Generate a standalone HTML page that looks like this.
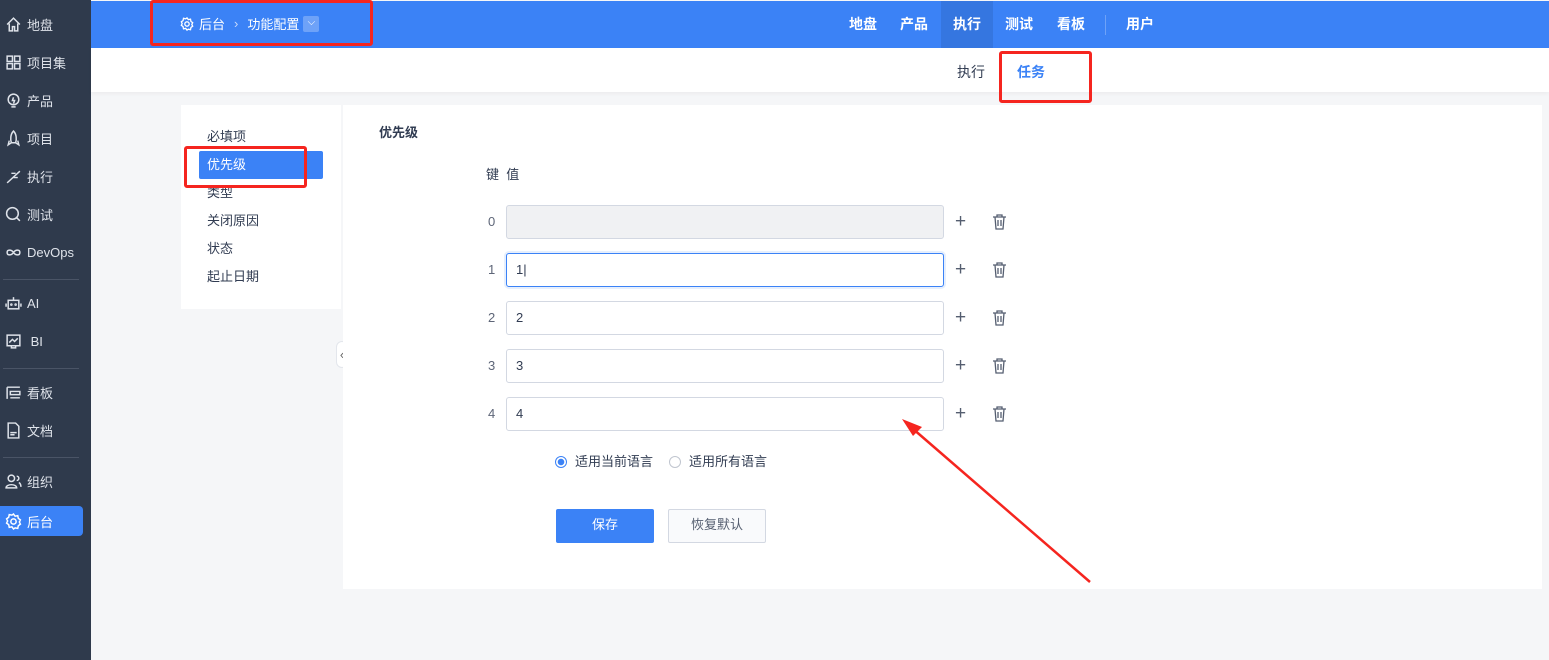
<!DOCTYPE html>
<html><head><meta charset="utf-8"><style>
*{box-sizing:border-box;margin:0;padding:0}
body{width:1549px;height:660px;overflow:hidden;font-family:"Liberation Sans","Noto Sans CJK SC",sans-serif;font-size:13px;color:#313c52;background:#f5f6f8;position:relative}
.side{position:absolute;left:0;top:0;width:91px;height:660px;background:#2f3a4c;color:#dfe3ea}
.si{position:absolute;left:0;width:83px;height:30px;display:flex;align-items:center;padding-left:5px;font-size:13px}
.si svg{width:17px;height:17px;margin-right:5px;stroke:#dfe3ea;fill:none;stroke-width:1.4}
.si.act{background:#3b82f6;border-radius:0 4px 4px 0;color:#fff}
.hr{position:absolute;left:3px;width:76px;height:1px;background:#4a5466}
.top{position:absolute;left:91px;top:1px;width:1458px;height:47px;background:#3b82f6;color:#fff}
.sub{position:absolute;left:91px;top:48px;width:1458px;height:44px;background:#fff;box-shadow:0 2px 4px rgba(0,0,0,.04)}
.red{position:absolute;border:3px solid #f5251f;border-radius:3px}
.nv{position:absolute;top:0;height:47px;line-height:47px;font-size:14px;font-weight:bold}
.panel{position:absolute;background:#fff}
.mi{position:absolute;left:207px;font-size:13px}
.inp{position:absolute;left:506px;width:438px;height:34px;border:1px solid #d3d8e2;border-radius:3px;background:#fff;padding-left:9px;line-height:32px;font-size:13px}
.k{position:absolute;left:488px;font-size:13px;color:#5e6678}
.plus{position:absolute;left:955px;font-size:19px;color:#555e70;line-height:1}
.trash{position:absolute;left:992px;width:15px;height:16px}
</style></head><body>
<div class="side">
 <div class="si" style="top:9px"><svg viewBox="0 0 16 16"><path d="M2 8L8 2l6 6M4 7v7h3v-4h2v4h3V7"/></svg>地盘</div>
 <div class="si" style="top:47px"><svg viewBox="0 0 16 16"><rect x="2" y="2" width="5" height="5"/><rect x="9" y="2" width="5" height="5"/><rect x="2" y="9" width="5" height="5"/><rect x="9" y="9" width="5" height="5"/></svg>项目集</div>
 <div class="si" style="top:85px"><svg viewBox="0 0 16 16"><circle cx="8" cy="7" r="5"/><path d="M6 14h4M8 5l-1 3h2l-1 3"/></svg>产品</div>
 <div class="si" style="top:123px"><svg viewBox="0 0 16 16"><path d="M8 1c3 3 3 8 2 11H6C5 9 5 4 8 1zM6 12l-3 2 1-4M10 12l3 2-1-4"/></svg>项目</div>
 <div class="si" style="top:161px"><svg viewBox="0 0 16 16"><path d="M2 14L14 3M6 5l4 0M8 9l4 0"/></svg>执行</div>
 <div class="si" style="top:199px"><svg viewBox="0 0 16 16"><circle cx="7" cy="7" r="5.5"/><path d="M11 11l3 3"/></svg>测试</div>
 <div class="si" style="top:237px"><svg viewBox="0 0 16 16"><path d="M8 8c-2-3-6-3-6 0s4 3 6 0c2-3 6-3 6 0s-4 3-6 0"/></svg>DevOps</div>
 <div class="hr" style="top:279px"></div>
 <div class="si" style="top:288px"><svg viewBox="0 0 16 16"><rect x="3" y="5" width="10" height="8"/><path d="M8 2v3M1 8v3M15 8v3"/><circle cx="6" cy="9" r=".5"/><circle cx="10" cy="9" r=".5"/></svg>AI</div>
 <div class="si" style="top:326px"><svg viewBox="0 0 16 16"><rect x="2" y="2" width="12" height="10"/><path d="M4 9l3-3 2 2 3-3M6 12v2h4v-2"/></svg>&nbsp;BI</div>
 <div class="hr" style="top:368px"></div>
 <div class="si" style="top:377px"><svg viewBox="0 0 16 16"><path d="M2 3h12M2 3v11M5 7h9v3H5zM5 13h9"/></svg>看板</div>
 <div class="si" style="top:415px"><svg viewBox="0 0 16 16"><path d="M3 1h7l3 3v11H3zM5 10h6M5 12h4"/></svg>文档</div>
 <div class="hr" style="top:457px"></div>
 <div class="si" style="top:466px"><svg viewBox="0 0 16 16"><circle cx="6" cy="5" r="3"/><path d="M1 14c0-4 10-4 10 0zM11 3a2 2 0 010 4M13 9c2 1 2 3 2 4"/></svg>组织</div>
 <div class="si act" style="top:506px"><svg viewBox="0 0 16 16" style="stroke:#fff"><circle cx="8" cy="8" r="2.5"/><path d="M8 1l1.5 2 2.5-.5.5 2.5 2 1.5-1 2 1 2-2 1.5-.5 2.5-2.5-.5L8 15l-1.5-2-2.5.5-.5-2.5-2-1.5 1-2-1-2 2-1.5.5-2.5 2.5.5z"/></svg>后台</div>
</div>
<div class="top">
 <div style="position:absolute;left:89px;top:13px;font-size:13px;display:flex;align-items:center">
  <svg width="14" height="14" viewBox="0 0 16 16" style="fill:none;stroke:#fff;stroke-width:1.5;margin-right:5px"><circle cx="8" cy="8" r="2.5"/><path d="M8 1l1.5 2 2.5-.5.5 2.5 2 1.5-1 2 1 2-2 1.5-.5 2.5-2.5-.5L8 15l-1.5-2-2.5.5-.5-2.5-2-1.5 1-2-1-2 2-1.5.5-2.5 2.5.5z"/></svg>后台<span style="margin:0 9px;color:#c9dbfb">›</span>功能配置<span style="display:inline-block;width:16px;height:16px;background:#6ea2f8;border-radius:2px;margin-left:4px;text-align:center;line-height:14px;font-size:10px">⌵</span></div>
 <div class="nv" style="left:758px">地盘</div>
 <div class="nv" style="left:809px">产品</div>
 <div class="nv" style="left:850px;width:52px;background:#3576e0;text-align:center">执行</div>
 <div class="nv" style="left:914px">测试</div>
 <div class="nv" style="left:966px">看板</div>
 <div style="position:absolute;left:1014px;top:14px;width:1px;height:20px;background:#6ea2f8"></div>
 <div class="nv" style="left:1035px">用户</div>
</div>
<div class="sub">
 <div style="position:absolute;left:866px;top:14px;font-size:14px">执行</div>
 <div style="position:absolute;left:926px;top:14px;font-size:14px;color:#3b82f6;font-weight:bold">任务</div>
</div>
<div class="panel" style="left:181px;top:105px;width:160px;height:204px"></div>
<div class="mi" style="top:126px">必填项</div>
<div style="position:absolute;left:199px;top:151px;width:124px;height:28px;background:#3b82f6;border-radius:2px"></div>
<div class="mi" style="top:154px;color:#fff">优先级</div>
<div class="mi" style="top:182px">类型</div>
<div class="mi" style="top:210px">关闭原因</div>
<div class="mi" style="top:238px">状态</div>
<div class="mi" style="top:266px">起止日期</div>
<div style="position:absolute;left:336px;top:341px;width:12px;height:27px;background:#fff;border:1px solid #e3e6ec;border-radius:6px;font-size:13px;color:#666;text-align:center;line-height:25px">‹</div>
<div class="panel" style="left:343px;top:105px;width:1199px;height:484px"></div>
<div style="position:absolute;left:379px;top:122px;font-weight:bold;font-size:13px">优先级</div>
<div style="position:absolute;left:486px;top:164px;font-size:13px">键&nbsp;&nbsp;值</div>
<div class="k" style="top:214px">0</div><div class="inp" style="top:205px;background:#f0f1f3"></div>
<div class="k" style="top:262px">1</div><div class="inp" style="top:253px;border-color:#3b82f6;box-shadow:0 0 0 2px #e6effd">1|</div>
<div class="k" style="top:310px">2</div><div class="inp" style="top:301px">2</div>
<div class="k" style="top:358px">3</div><div class="inp" style="top:349px">3</div>
<div class="k" style="top:406px">4</div><div class="inp" style="top:397px">4</div>
<div class="plus" style="top:212px">+</div><div class="plus" style="top:260px">+</div><div class="plus" style="top:308px">+</div><div class="plus" style="top:356px">+</div><div class="plus" style="top:404px">+</div>
<svg class="trash" style="top:214px" viewBox="0 0 15 16" fill="none" stroke="#555e70" stroke-width="1.3"><path d="M1 3h13M5 3V1h5v2M3 3l1 12h7l1-12M6 6v6M9 6v6"/></svg>
<svg class="trash" style="top:262px" viewBox="0 0 15 16" fill="none" stroke="#555e70" stroke-width="1.3"><path d="M1 3h13M5 3V1h5v2M3 3l1 12h7l1-12M6 6v6M9 6v6"/></svg>
<svg class="trash" style="top:310px" viewBox="0 0 15 16" fill="none" stroke="#555e70" stroke-width="1.3"><path d="M1 3h13M5 3V1h5v2M3 3l1 12h7l1-12M6 6v6M9 6v6"/></svg>
<svg class="trash" style="top:358px" viewBox="0 0 15 16" fill="none" stroke="#555e70" stroke-width="1.3"><path d="M1 3h13M5 3V1h5v2M3 3l1 12h7l1-12M6 6v6M9 6v6"/></svg>
<svg class="trash" style="top:406px" viewBox="0 0 15 16" fill="none" stroke="#555e70" stroke-width="1.3"><path d="M1 3h13M5 3V1h5v2M3 3l1 12h7l1-12M6 6v6M9 6v6"/></svg>
<div style="position:absolute;left:555px;top:456px;width:12px;height:12px;border-radius:50%;border:1px solid #3b82f6;background:radial-gradient(#3b82f6 3px,#fff 3.5px)"></div>
<div style="position:absolute;left:575px;top:451px;font-size:13px">适用当前语言</div>
<div style="position:absolute;left:669px;top:456px;width:12px;height:12px;border-radius:50%;border:1px solid #c0c5cf"></div>
<div style="position:absolute;left:689px;top:451px;font-size:13px">适用所有语言</div>
<div style="position:absolute;left:556px;top:509px;width:98px;height:34px;background:#3b82f6;border-radius:2px;color:#fff;text-align:center;line-height:32px;font-size:13px">保存</div>
<div style="position:absolute;left:668px;top:509px;width:98px;height:34px;background:#f9fafc;border:1px solid #d3d8e2;border-radius:2px;color:#555e70;text-align:center;line-height:30px;font-size:13px">恢复默认</div>
<div class="red" style="left:150px;top:0;width:223px;height:46px"></div>
<div class="red" style="left:999px;top:51px;width:93px;height:52px"></div>
<div class="red" style="left:184px;top:146px;width:123px;height:42px"></div>
<svg style="position:absolute;left:0;top:0" width="1549" height="660"><path d="M1090 582L912 428" stroke="#f5251f" stroke-width="2.5"/><path d="M902 419L922 427L913 436Z" fill="#f5251f"/></svg>
</body></html>
